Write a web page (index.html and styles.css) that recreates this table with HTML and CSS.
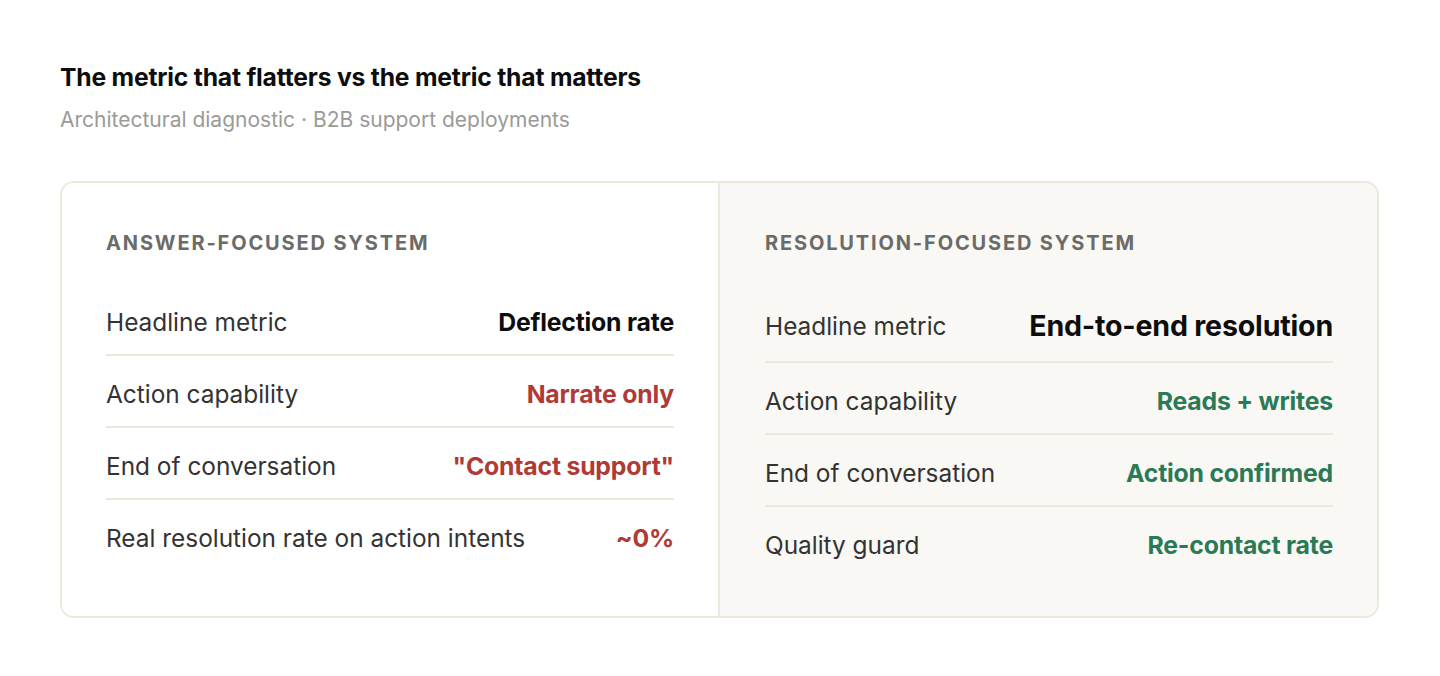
FILE: index.html
```html
<!DOCTYPE html>
<html lang="en">
<head>
<meta charset="utf-8">
<title>The metric that flatters vs the metric that matters</title>
<link rel="stylesheet" href="styles.css">
</head>
<body>
<main class="page">
  <h1 class="title">The metric that flatters vs the metric that matters</h1>
  <p class="subtitle">Architectural diagnostic · B2B support deployments</p>
  <section class="card">
    <div class="panel panel-answer">
      <h2 class="panel-label">Answer-focused system</h2>
      <div class="row"><span class="key">Headline metric</span><span class="val">Deflection rate</span></div>
      <div class="row"><span class="key">Action capability</span><span class="val bad">Narrate only</span></div>
      <div class="row"><span class="key">End of conversation</span><span class="val bad">"Contact support"</span></div>
      <div class="row"><span class="key">Real resolution rate on action intents</span><span class="val bad">~0%</span></div>
    </div>
    <div class="panel panel-resolution">
      <h2 class="panel-label">Resolution-focused system</h2>
      <div class="row row-hero"><span class="key">Headline metric</span><span class="val val-hero">End-to-end resolution</span></div>
      <div class="row"><span class="key">Action capability</span><span class="val good">Reads + writes</span></div>
      <div class="row"><span class="key">End of conversation</span><span class="val good">Action confirmed</span></div>
      <div class="row"><span class="key">Quality guard</span><span class="val good">Re-contact rate</span></div>
    </div>
  </section>
</main>
</body>
</html>
```
FILE: styles.css
```css
* { box-sizing: border-box; }
html, body { margin: 0; background: #ffffff; }
body {
  font-family: Inter, "Noto Sans", "Liberation Sans", sans-serif;
  color: #222;
}
.page {
  padding: 62px 61px 40px 60px;
}
.title {
  margin: 0;
  font-size: 24.7px;
  line-height: 30px;
  font-weight: 700;
  color: #0d0d0d;
  letter-spacing: -0.2px;
}
.subtitle {
  margin: 14px 0 0;
  font-size: 21px;
  line-height: 28px;
  color: #9a9a98;
}
.card {
  margin-top: 47px;
  display: grid;
  grid-template-columns: 658px 1fr;
  border: 2px solid #ece8de;
  border-radius: 14px;
  overflow: hidden;
}
.panel {
  padding: 47px 44px 39px 44px;
}
.panel-answer {
  background: #ffffff;
  border-right: 2px solid #ece8de;
}
.panel-resolution {
  background: #f9f8f4;
  padding-left: 45px;
}
.panel-label {
  margin: 0 0 28px;
  font-size: 20px;
  line-height: 26px;
  font-weight: 700;
  letter-spacing: 1.85px;
  text-transform: uppercase;
  color: #6b6b69;
}
.row {
  display: flex;
  justify-content: space-between;
  align-items: center;
  padding: 23px 0 17px;
  border-bottom: 2px solid #ece8de;
}
.row:last-child { border-bottom: none; }
.key {
  font-size: 24.4px;
  line-height: 30px;
  color: #333333;
}
.val {
  font-size: 24.8px;
  line-height: 30px;
  font-weight: 700;
  color: #0d0d0d;
  letter-spacing: -0.2px;
}
.val-hero {
  font-size: 28.6px;
  line-height: 36px;
}
.row-hero { padding: 24px 0 17px; }
.bad { color: #b03a35; }
.good { color: #2a7a57; }
```
